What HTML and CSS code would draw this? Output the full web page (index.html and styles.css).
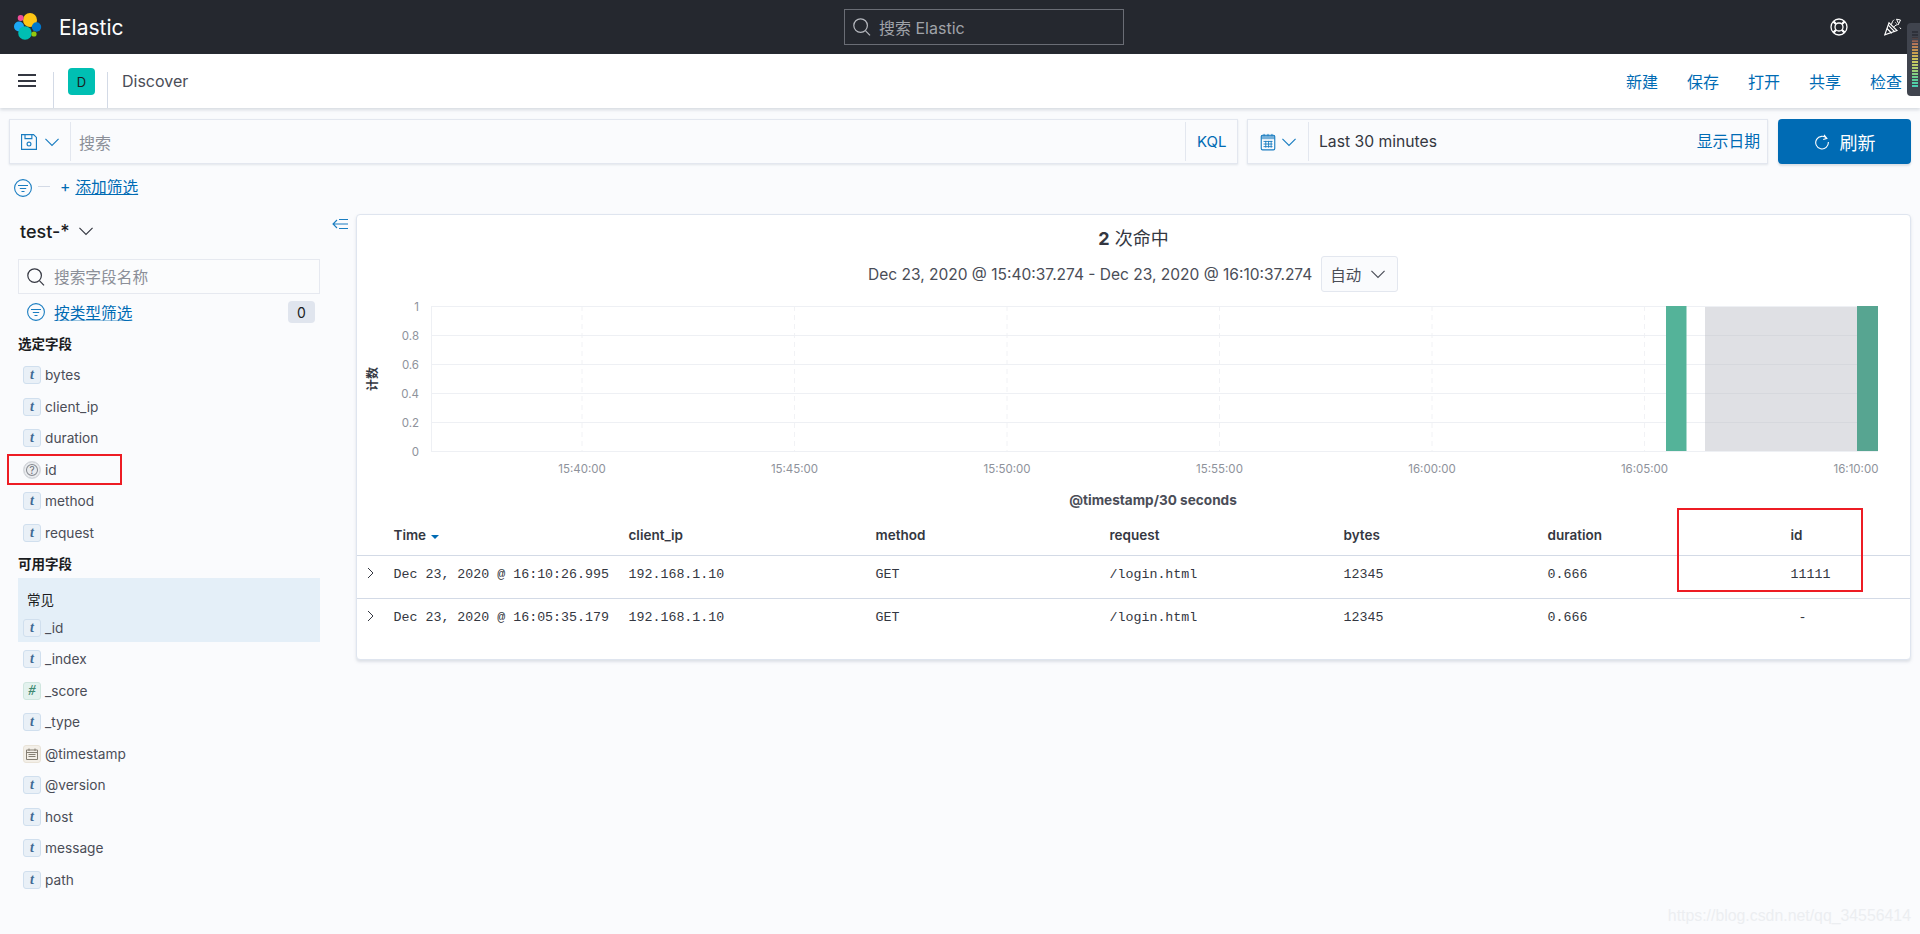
FILE: index.html
```html
<!DOCTYPE html>
<html lang="zh">
<head>
<meta charset="utf-8">
<title>Discover - Elastic</title>
<link rel="stylesheet" href="styles.css">
</head>
<body>
<svg class="defs" width="0" height="0" aria-hidden="true">
  <symbol id="chev" viewBox="0 0 16 16"><path d="M.5 4.500 8 12l7.500-7.500" fill="none" stroke="currentColor" stroke-width="1.300"/></symbol>
  <symbol id="filter" viewBox="0 0 18 18"><circle cx="9" cy="9" r="8.400" fill="none" stroke="currentColor" stroke-width="1.100"/><path d="M4 6.500h10M5.800 9.500h6.400M7.500 12.500h3" fill="none" stroke="currentColor" stroke-width="1.200"/></symbol>
  <symbol id="search" viewBox="0 0 18 18"><circle cx="7.600" cy="7.600" r="6.800" fill="none" stroke="currentColor" stroke-width="1.200"/><path d="m12.600 12.800 4.400 4.600" fill="none" stroke="currentColor" stroke-width="1.200"/></symbol>
  <symbol id="cal" viewBox="0 0 14 14"><path d="M1.500 3h11v9.500h-11z" fill="none" stroke="currentColor"/><path d="M1.500 5.500h11M4 1.500v2.500M10 1.500v2.500M3.500 7.500h7M3.500 9.500h7" fill="none" stroke="currentColor" stroke-width="1"/></symbol>
</svg>

<header class="topbar">
  <div class="brand">
    <svg class="logo" viewBox="0 0 28 28" width="28" height="28">
      <circle cx="16" cy="7" r="7" fill="#fec514"/>
      <circle cx="6.700" cy="5" r="3" fill="#f04e98"/>
      <circle cx="5" cy="13.500" r="5" fill="#1ba9f5"/>
      <circle cx="22.500" cy="14" r="4.700" fill="#0077cc"/>
      <circle cx="11" cy="20" r="6.800" fill="#00bfb3"/>
      <circle cx="20" cy="21" r="2.600" fill="#93c90e"/>
    </svg>
    <span class="brand-name">Elastic</span>
  </div>
  <div class="global-search">
    <svg class="gs-icon"><use href="#search"/></svg>
    <span>搜索 Elastic</span>
  </div>
  <div class="top-icons">
    <svg class="top-icon" viewBox="0 0 18 18">
      <circle cx="9" cy="9" r="8" fill="none" stroke="#fff" stroke-width="1.300"/>
      <circle cx="9" cy="9" r="4" fill="none" stroke="#fff" stroke-width="1.300"/>
      <path d="M3.400 3.400 6.200 6.200M14.600 3.400 11.800 6.200M3.400 14.600l2.800-2.800M14.600 14.600l-2.800-2.800" stroke="#fff" stroke-width="2.200"/>
    </svg>
    <svg class="top-icon" viewBox="0 0 18 18">
      <path d="M.8 16.800 5 4.800l8 7.800z" fill="none" stroke="#fff" stroke-width="1.100"/>
      <path d="M3 10.500 7.800 15.200M4.300 7.200 10.800 13.800" stroke="#fff" stroke-width="1.200"/>
      <path d="M7.500 6.500c.4-2 1.200-3.700 2.600-4.800M9.800 9c1.200-1.700 3-2.500 5-2.500" fill="none" stroke="#fff" stroke-width="1"/>
      <path d="M12.500 1.200l4 .8-1.800 3.800zM11.500 4.500l1 1M15.800 9.500l1.200 1.500" stroke="#fff" fill="none" stroke-width="1"/>
    </svg>
  </div>
</header>

<nav class="appbar">
  <button class="burger" aria-label="menu"><span></span><span></span><span></span></button>
  <div class="crumb-box"><span class="app-badge">D</span></div>
  <span class="crumb">Discover</span>
  <div class="app-links">
    <a>新建</a><a>保存</a><a>打开</a><a>共享</a><a>检查</a>
  </div>
</nav>

<section class="querybar">
  <div class="qbox qbox-main">
    <div class="q-prefix q-save">
      <svg class="i16" viewBox="1 1 14 14"><path d="M1.500 1.500h10.500l2.500 2.500v10.500h-13z M4.500 1.500v3.500h6v-3.500" fill="none" stroke="currentColor" stroke-width="1"/><circle cx="8" cy="9.800" r="1.700" fill="none" stroke="currentColor" stroke-width="1"/></svg>
      <svg class="i14"><use href="#chev"/></svg>
    </div>
    <div class="q-input">搜索</div>
    <div class="q-suffix">KQL</div>
  </div>
  <div class="qbox qbox-date">
    <div class="q-prefix q-cal">
      <svg class="i-cal" viewBox="0 0 14 16"><rect x="1" y="2" width="12" height="13" rx="1.200" fill="none" stroke="currentColor"/><rect x="1" y="2" width="12" height="3.500" fill="currentColor" opacity=".6"/><path d="M3.500 .8v2M7 .8v2M10.500 .8v2M3 7.500h8M3 9.800h8M3 12.100h8M5 7v6M7.500 7v6M9.800 7v6" stroke="currentColor" stroke-width=".8" fill="none"/></svg>
      <svg class="i14"><use href="#chev"/></svg>
    </div>
    <div class="date-range">Last 30 minutes</div>
    <a class="date-show">显示日期</a>
  </div>
  <button class="refresh">
    <svg class="i16" viewBox="0 0 16 16"><path d="M12.800 4.500A6.300 6.300 0 1 0 14.300 8M10 .8l2.900 3.600-3.700 1.100" fill="none" stroke="#fff" stroke-width="1.100"/></svg>
    <span>刷新</span>
  </button>
</section>

<div class="filterbar">
  <svg class="i18 link-c"><use href="#filter"/></svg>
  <span class="dash"></span>
  <span class="add-plus">+</span>
  <a class="add-filter">添加筛选</a>
</div>

<main class="workspace">
  <aside class="sidebar">
    <div class="index-row"><span class="index-name">test-*</span><svg class="i14"><use href="#chev"/></svg></div>
    <div class="field-search">
      <svg class="i18 dark-c"><use href="#search"/></svg>
      <span>搜索字段名称</span>
    </div>
    <div class="type-filter">
      <svg class="i18 link-c"><use href="#filter"/></svg>
      <a>按类型筛选</a>
      <span class="count">0</span>
    </div>
    <h3 class="field-head">选定字段</h3>
    <ul class="fields">
      <li class="field"><span class="ft ft-t">t</span>bytes</li>
      <li class="field"><span class="ft ft-t">t</span>client_ip</li>
      <li class="field"><span class="ft ft-t">t</span>duration</li>
      <li class="field"><span class="ft ft-q">?</span>id<span class="redbox redbox-field"></span></li>
      <li class="field"><span class="ft ft-t">t</span>method</li>
      <li class="field"><span class="ft ft-t">t</span>request</li>
    </ul>
    <h3 class="field-head field-head-next">可用字段</h3>
    <div class="popular">
      <div class="popular-label">常见</div>
      <div class="field"><span class="ft ft-t">t</span>_id</div>
    </div>
    <ul class="fields fields-rest">
      <li class="field"><span class="ft ft-t">t</span>_index</li>
      <li class="field"><span class="ft ft-n">#</span>_score</li>
      <li class="field"><span class="ft ft-t">t</span>_type</li>
      <li class="field"><span class="ft ft-d"><svg class="i14"><use href="#cal"/></svg></span>@timestamp</li>
      <li class="field"><span class="ft ft-t">t</span>@version</li>
      <li class="field"><span class="ft ft-t">t</span>host</li>
      <li class="field"><span class="ft ft-t">t</span>message</li>
      <li class="field"><span class="ft ft-t">t</span>path</li>
    </ul>
  </aside>

  <div class="content">
    <svg class="collapse" viewBox="0 0 16 12"><path d="M5 2 1 6l4 4M1 6h15M7 1.500h9M7 10.500h9" fill="none" stroke="#1a7dc1" stroke-width="1.100"/></svg>
    <section class="panel">
      <div class="hits"><b>2</b> 次命中</div>
      <div class="range-row">
        <span>Dec 23, 2020 @ 15:40:37.274 - Dec 23, 2020 @ 16:10:37.274</span>
        <div class="interval"><span>自动</span><svg class="i14"><use href="#chev"/></svg></div>
      </div>
      <svg class="chart" width="1554" height="224" viewBox="357 292 1554 224">
        <rect x="1705" y="306" width="152" height="145" fill="#dfe0e4"/>
        <g class="gridv">
          <path d="M582 306V451M794.500 306V451M1007 306V451M1219.500 306V451M1432 306V451M1644.500 306V451"/>
        </g>
        <g class="gridh">
          <path d="M431 306.500H1878M431 335.500H1878M431 364.500H1878M431 393.500H1878M431 422.500H1878M431 451.500H1878M431.500 306V452"/>
        </g>
        <g class="gridg">
          <path d="M1705 335.500H1857M1705 364.500H1857M1705 393.500H1857M1705 422.500H1857"/>
        </g>
        <rect x="1666" y="306" width="20.500" height="145" fill="#54b399"/>
        <rect x="1857" y="306" width="21" height="145" fill="#57a591"/>
        <g class="ylab">
          <text x="419" y="311">1</text><text x="419" y="340">0.8</text><text x="419" y="369">0.6</text><text x="419" y="398">0.4</text><text x="419" y="427">0.2</text><text x="419" y="456">0</text>
        </g>
        <g class="xlab">
          <text x="582" y="473">15:40:00</text><text x="794.500" y="473">15:45:00</text><text x="1007" y="473">15:50:00</text><text x="1219.500" y="473">15:55:00</text><text x="1432" y="473">16:00:00</text><text x="1644.500" y="473">16:05:00</text><text x="1856" y="473">16:10:00</text>
        </g>
        <text class="ytitle" transform="translate(377 379) rotate(-90)">计数</text>
        <text class="xtitle" x="1153" y="505">@timestamp/30 seconds</text>
      </svg>
      <table class="docs">
        <colgroup>
          <col class="c0"><col class="c1"><col class="c2"><col class="c3"><col class="c4"><col class="c5"><col class="c6"><col class="c7">
        </colgroup>
        <thead>
          <tr><th></th><th>Time <span class="sort"></span></th><th>client_ip</th><th>method</th><th>request</th><th>bytes</th><th>duration</th><th>id</th></tr>
        </thead>
        <tbody>
          <tr class="row-line"><td class="tog"><svg class="i10" viewBox="0 0 8 12"><path d="M1 1l5 5-5 5" fill="none" stroke="#343741"/></svg></td><td>Dec 23, 2020 @ 16:10:26.995</td><td>192.168.1.10</td><td>GET</td><td>/login.html</td><td>12345</td><td>0.666</td><td>11111</td></tr>
          <tr><td class="tog"><svg class="i10" viewBox="0 0 8 12"><path d="M1 1l5 5-5 5" fill="none" stroke="#343741"/></svg></td><td>Dec 23, 2020 @ 16:05:35.179</td><td>192.168.1.10</td><td>GET</td><td>/login.html</td><td>12345</td><td>0.666</td><td class="nil">-</td></tr>
        </tbody>
      </table>
      <span class="redbox redbox-col"></span>
    </section>
  </div>
</main>

<div class="meter"><div class="meter-bars"></div></div>
<div class="watermark">https://blog.csdn.net/qq_34556414</div>
</body>
</html>
```

FILE: styles.css
```css
* { box-sizing: border-box; }
html, body { margin: 0; height: 934px; overflow: hidden; }
body {
  background: #fafbfd;
  color: #343741;
  font-family: Inter, "Noto Sans CJK SC", sans-serif;
  font-size: 14px;
  position: relative;
}
.defs { position: absolute; }
a { color: #006bb4; }
ul { list-style: none; margin: 0; padding: 0; }
h3 { margin: 0; }
button { font-family: inherit; border: 0; padding: 0; }
.i10 { width: 8px; height: 12px; display: block; }
.i14 { width: 14px; height: 14px; display: block; }
.i16 { width: 16px; height: 16px; display: block; }
.i18 { width: 18px; height: 18px; display: block; }
.i-cal { width: 16px; height: 18px; display: block; }
.link-c { color: #1a7dc1; }
.dark-c { color: #343741; }

/* top bar */
.topbar {
  height: 54px;
  background: #25282f;
  display: grid;
  grid-template-columns: 844px 280px 1fr;
  align-items: center;
}
.brand { display: flex; align-items: center; padding-left: 14px; }
.brand-name { color: #fff; font-size: 21px; margin-left: 17px; }
.global-search {
  height: 36px;
  border: 1px solid #6a6d75;
  display: flex;
  align-items: center;
  padding-left: 8px;
  gap: 8px;
  color: #a0a3a9;
  font-size: 16px;
}
.gs-icon { width: 18px; height: 18px; color: #b8bac0; }
.top-icons { display: flex; justify-content: flex-end; gap: 36px; padding-right: 18px; }
.top-icon { width: 18px; height: 18px; display: block; }

/* app bar */
.appbar {
  height: 54px;
  background: #fff;
  box-shadow: 0 2px 3px rgba(152, 162, 179, .35);
  display: flex;
  align-items: center;
  position: relative;
}
.burger {
  width: 53px;
  height: 54px;
  background: none;
  display: flex;
  flex-direction: column;
  gap: 3.500px;
  padding: 20px 17px 0 18px;
}
.burger span { display: block; height: 2px; background: #343741; flex: none; }
.crumb-box {
  width: 55px;
  height: 36px;
  margin-top: 18px;
  border-left: 1px solid #d3dae6;
  border-right: 1px solid #d3dae6;
  position: relative;
}
.app-badge {
  position: absolute;
  left: 14px;
  top: -4px;
  width: 27px;
  height: 27px;
  border-radius: 4px;
  background: #00bfb3;
  color: #1a1c21;
  font-size: 13px;
  display: flex;
  align-items: center;
  justify-content: center;
}
.crumb { font-size: 16px; margin-left: 14px; color: #4a4d57; }
.app-links { margin-left: auto; display: flex; gap: 29px; padding-right: 18px; font-size: 16px; }

/* query bar */
.querybar {
  display: flex;
  margin: 11px 9px 0;
  height: 45px;
}
.qbox {
  display: flex;
  align-items: stretch;
  height: 45px;
  background: #fafbfd;
  border: 1px solid #e3e7ef;
  box-shadow: 0 1px 2px rgba(152, 162, 179, .25);
}
.qbox-main { width: 1229px; }
.qbox-date { width: 521px; margin-left: 9px; }
.q-prefix {
  display: flex;
  align-items: center;
  color: #1a7dc1;
  margin: 2px 0;
  border-right: 1px solid #e3e7ef;
}
.q-save { width: 61px; padding-left: 11px; gap: 8px; }
.q-cal { width: 61px; padding-left: 12px; gap: 6px; }
.q-input { flex: 1; padding-left: 8px; font-size: 16px; color: #8b8f98; display: flex; align-items: center; }
.q-suffix {
  width: 52px;
  margin: 2px 0;
  border-left: 1px solid #e3e7ef;
  color: #006bb4;
  font-size: 15px;
  display: flex;
  align-items: center;
  padding-left: 11px;
}
.date-range { flex: 1; padding-left: 10px; font-size: 15.700px; display: flex; align-items: center; }
.date-show { font-size: 15.800px; padding: 9px 7px 0 0; }
.refresh {
  width: 133px;
  margin-left: 10px;
  background: #006bb4;
  color: #fff;
  border-radius: 4px;
  font-size: 18px;
  display: flex;
  align-items: center;
  justify-content: center;
  gap: 10px;
  box-shadow: 0 2px 2px rgba(152, 162, 179, .3);
}

/* filter bar */
.filterbar { height: 24px; margin-top: 12px; padding: 0 0 3px 14px; display: flex; align-items: center; color: #006bb4; font-size: 15.700px; }
.filterbar .i18 { margin-top: 3px; }
.dash { width: 12px; height: 1px; background: #d3dae6; margin: 0 10px 0 6px; }
.add-plus { margin-right: 5px; }
.add-filter { text-decoration: underline; color: #006bb4; }

/* workspace */
.workspace {
  display: grid;
  grid-template-columns: 332px 1fr;
  margin-top: 14px;
}
.sidebar { padding-left: 18px; position: relative; }
.index-row { height: 34px; display: flex; align-items: center; gap: 9px; padding: 0 0 0 2px; }
.index-name { font-size: 18px; font-weight: 500; color: #1a1c21; }
.field-search {
  width: 302px;
  height: 35px;
  margin-top: 11px;
  border: 1px solid #e6e9f0;
  background: #fbfcfd;
  display: flex;
  align-items: center;
  gap: 9px;
  padding-left: 8px;
  color: #8b8f98;
  font-size: 15.700px;
}
.type-filter { width: 302px; height: 30px; margin: 3px 0 0; display: flex; align-items: center; padding: 0 5px 0 9px; gap: 9px; font-size: 15.700px; }
.type-filter a { text-decoration: underline; text-decoration-color: #9cc4e0; }
.count {
  margin-left: auto;
  width: 27px;
  height: 22px;
  background: #e0e5ee;
  border-radius: 4px;
  font-size: 14px;
  color: #1a1c21;
  display: flex;
  align-items: center;
  justify-content: center;
}
.field-head { height: 24px; margin-top: 5px; font-size: 13.500px; font-weight: 700; color: #1a1c21; display: flex; align-items: center; line-height: 24px; }
.field-head-next { margin-top: 4px; }
.field { height: 31.500px; display: flex; align-items: center; font-size: 13.700px; color: #4a4d57; position: relative; padding-left: 5px; padding-top: 1px; }
.field-head + .fields { margin-top: 3px; }
.ft {
  width: 18px;
  height: 18px;
  flex: none;
  margin-right: 4px;
  border-radius: 3px;
  border: 1px solid #d0dfee;
  background: #e9f0f7;
  display: flex;
  align-items: center;
  justify-content: center;
  font: italic 700 14px/1 "Liberation Serif", serif;
  color: #3f6a94;
}
.ft-q { border-radius: 50%; background: #e9ebee; border-color: #d5d8dd; color: #6a6d75; font: 400 10px/1 Inter, sans-serif; box-shadow: inset 0 0 0 2px #e9ebee, inset 0 0 0 3px #85888f; }
.ft-n { background: #e3f2ee; border-color: #cfe6df; color: #3f8a72; font-size: 14px; }
.ft-d { background: #f3efe8; border-color: #e9e3d8; color: #857f73; }
.popular { height: 64.250px; margin-top: 2px; width: 302px; background: #e4eff8; display: flex; flex-direction: column; justify-content: flex-end; }
.popular-label { height: 32.750px; padding: 12px 0 0 9px; font-size: 13.500px; line-height: 20px; color: #1a1c21; }
.popular .field { padding-top: 2px; }
.fields-rest .field { padding-top: 2px; }

/* content panel */
.content { position: relative; padding-right: 9px; }
.collapse { position: absolute; left: 0; top: 4px; width: 16px; height: 12px; }
.panel {
  margin-left: 24px;
  width: 1555px;
  height: 446px;
  background: #fff;
  border: 1px solid #dfe5ef;
  border-radius: 4px;
  box-shadow: 0 2px 3px rgba(152, 162, 179, .3);
  position: relative;
}
.hits { height: 41px; text-align: center; font-size: 18px; line-height: 47px; color: #343741; }
.hits b { font-weight: 700; }
.range-row { height: 36px; display: flex; align-items: center; font-size: 15.530px; padding-left: 511px; gap: 9px; color: #4a4d57; }
.interval {
  width: 77px;
  height: 36px;
  border: 1px solid #e3e7ef;
  border-radius: 3px;
  background: #fafbfd;
  display: flex;
  align-items: center;
  padding-left: 8px;
  gap: 10px;
  font-size: 15.500px;
}
.chart { display: block; }
.chart text { font-family: Inter, "Noto Sans CJK SC", sans-serif; }
.gridh path { stroke: #eef0f4; stroke-width: 1; fill: none; }
.gridv path { stroke: #f1f2f5; stroke-width: 1; fill: none; stroke-dasharray: 5 4; }
.gridg path { stroke: #d6d8dd; stroke-width: 1; fill: none; }
.ylab text { font-size: 11.500px; fill: #8e929b; text-anchor: end; }
.xlab text { font-size: 11.500px; fill: #8e929b; text-anchor: middle; }
.ytitle { font-size: 12px; font-weight: 700; fill: #343741; text-anchor: middle; }
.xtitle { font-size: 13.600px; font-weight: 700; fill: #4a4d57; text-anchor: middle; }

.docs { table-layout: fixed; width: 1553px; border-collapse: collapse; }
.c0 { width: 36.500px; } .c1 { width: 235px; } .c2 { width: 247px; } .c3 { width: 234px; }
.c4 { width: 234px; } .c5 { width: 204px; } .c6 { width: 243px; } .c7 { width: auto; }
.docs th {
  height: 39px;
  padding: 0;
  text-align: left;
  font-size: 13.500px;
  font-weight: 600;
  color: #343741;
  border-bottom: 1px solid #d3dae6;
}
.docs td {
  height: 43px;
  padding: 9px 0 0;
  vertical-align: top;
  font-family: "Liberation Mono", monospace;
  font-size: 13.300px;
  line-height: 20px;
  color: #343741;
  white-space: nowrap;
}
.docs td.nil { padding-left: 8px; }
.row-line td { border-bottom: 1px solid #d3dae6; }
.docs .tog { padding: 11px 0 0 10px; }
.sort { display: inline-block; width: 0; height: 0; border: 4.500px solid transparent; border-top: 4px solid #006bb4; border-bottom: 0; vertical-align: 1px; margin-left: 1px; }

/* annotations */
.redbox { position: absolute; border: 2px solid #ed1c24; pointer-events: none; }
.redbox-field { left: -11px; top: 0; width: 115px; height: 31px; }
.redbox-col { left: 1320px; top: 293px; width: 186px; height: 84px; }

/* overlays */
.meter {
  position: absolute;
  left: 1907px;
  top: 23px;
  width: 13px;
  height: 73px;
  background: #40444e;
  border-radius: 4px 0 0 4px;
}
.meter-bars {
  position: absolute;
  left: 5px;
  right: 2px;
  top: 7px;
  bottom: 8px;
  background:
    repeating-linear-gradient(#40444e 0 1px, transparent 1px 3px),
    linear-gradient(#2e313a 0, #2e313a 12%, #b0705a 22%, #c99a4e 38%, #cfc95c 52%, #a8cf72 68%, #5fcf94 84%, #45d0b8 100%);
}
.watermark {
  position: absolute;
  right: 9px;
  bottom: 9px;
  font-family: "Liberation Sans", sans-serif;
  font-size: 15.850px;
  color: #eceef1;
}
```
